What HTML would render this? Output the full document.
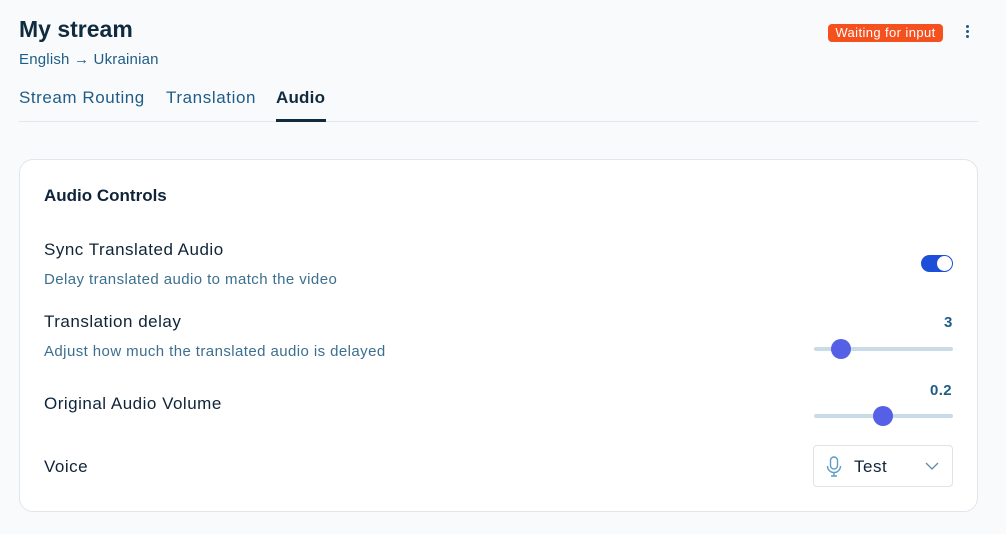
<!DOCTYPE html>
<html><head><style>
*{margin:0;padding:0;box-sizing:border-box}
body{width:1006px;height:534px;background:#f9fafc;font-family:"Liberation Sans",sans-serif;position:relative;overflow:hidden;color:#0f2438}
.a{position:absolute;white-space:nowrap}
.l{letter-spacing:0.5px}
.s{letter-spacing:0.42px}
</style></head><body>
<div class="a" style="left:19px;top:16px;font-size:23px;font-weight:bold;color:#102a3e">My stream</div>
<div class="a" style="left:19px;top:51px;font-size:15px;color:#1f5d86;letter-spacing:0.2px">English → Ukrainian</div>
<div class="a" style="left:828px;top:24px;width:115px;height:18px;background:#f4511e;border-radius:4px;color:#fff;font-size:13px;text-align:center;line-height:18px;letter-spacing:0.4px">Waiting for input</div>
<div class="a" style="left:966px;top:25px;width:3px;height:3px;border-radius:50%;background:#1f5d86;box-shadow:0 5px 0 #1f5d86,0 10px 0 #1f5d86"></div>
<div class="a" style="left:19px;top:88px;font-size:17px;color:#1f5d86;letter-spacing:0.55px">Stream Routing</div>
<div class="a" style="left:166px;top:88px;font-size:17px;color:#1f5d86;letter-spacing:0.6px">Translation</div>
<div class="a" style="left:276px;top:88px;font-size:17px;font-weight:bold;color:#102a3e;letter-spacing:0.2px">Audio</div>
<div class="a" style="left:19px;top:121px;width:959px;height:1px;background:#e2e7ec"></div>
<div class="a" style="left:276px;top:119px;width:50px;height:3px;background:#102a3e"></div>
<div class="a" style="left:19px;top:159px;width:959px;height:353px;background:#fff;border:1px solid #e1e6eb;border-radius:14px"></div>
<div class="a" style="left:44px;top:186px;font-size:17px;font-weight:bold">Audio Controls</div>
<div class="a l" style="left:44px;top:240px;font-size:17px">Sync Translated Audio</div>
<div class="a s" style="left:44px;top:271px;font-size:15px;color:#3c6f8f">Delay translated audio to match the video</div>
<div class="a" style="left:921px;top:255px;width:32px;height:17px;border-radius:9px;background:#1d4ed8"></div>
<div class="a" style="left:937px;top:256px;width:15px;height:15px;border-radius:50%;background:#fff"></div>
<div class="a l" style="left:44px;top:312px;font-size:17px">Translation delay</div>
<div class="a s" style="left:44px;top:343px;font-size:15px;color:#3c6f8f">Adjust how much the translated audio is delayed</div>
<div class="a" style="left:944px;top:314px;font-size:15px;font-weight:bold;color:#1f5d86">3</div>
<div class="a" style="left:814px;top:347px;width:139px;height:4px;border-radius:2px;background:#c9dbe6"></div>
<div class="a" style="left:831px;top:339px;width:20px;height:20px;border-radius:50%;background:#5560e6"></div>
<div class="a l" style="left:44px;top:394px;font-size:17px">Original Audio Volume</div>
<div class="a" style="left:930px;top:382px;font-size:15px;font-weight:bold;color:#1f5d86;letter-spacing:0.4px">0.2</div>
<div class="a" style="left:814px;top:414px;width:139px;height:4px;border-radius:2px;background:#c9dbe6"></div>
<div class="a" style="left:873px;top:406px;width:20px;height:20px;border-radius:50%;background:#5560e6"></div>
<div class="a l" style="left:44px;top:457px;font-size:17px">Voice</div>
<div class="a" style="left:813px;top:445px;width:140px;height:42px;border:1px solid #dde3e8;border-radius:4px"></div>
<svg class="a" style="left:825px;top:456px" width="18" height="22" viewBox="0 0 18 22" fill="none" stroke="#5d9cc4" stroke-width="1.4"><rect x="5.5" y="1" width="7" height="12" rx="3.5"/><path d="M2.5 10a6.5 6.5 0 0 0 13 0M9 16.5V20M6 20h6"/></svg>
<div class="a l" style="left:854px;top:457px;font-size:17px">Test</div>
<svg class="a" style="left:925px;top:462px" width="14" height="8" viewBox="0 0 14 8" fill="none" stroke="#5d8aa8" stroke-width="1.3"><path d="M1 1l6 6 6-6"/></svg>
</body></html>
